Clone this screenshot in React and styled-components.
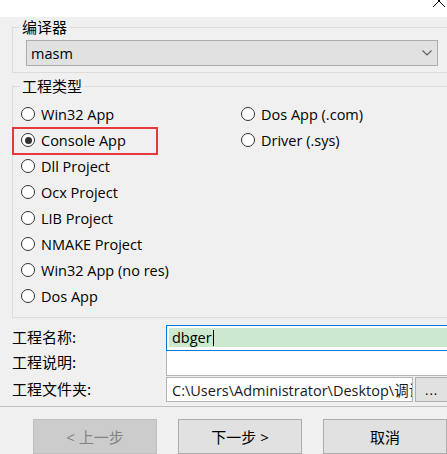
import React from "react";
import styled, { createGlobalStyle, css } from "styled-components";

const Global = createGlobalStyle`
  html, body { margin: 0; padding: 0; background: #f0f0f0; }
  * { box-sizing: border-box; }
`;

const LATIN = `"Open Sans", "Noto Sans CJK SC", sans-serif`;
const CJK = `"Noto Sans CJK SC", "Open Sans", sans-serif`;

const Window = styled.div`
  width: 447px;
  height: 454px;
  overflow: hidden;
  background: #f0f0f0;
  display: flex;
  flex-direction: column;
  color: #000;
`;

const TitleBar = styled.div`
  height: 17px;
  flex: none;
  background: #fff;
  display: flex;
  justify-content: flex-end;
  align-items: flex-start;
  overflow: hidden;
`;

const CloseIcon = styled.svg`
  margin-top: -6px;
  margin-right: 1px;
`;

const Body = styled.div`
  display: flex;
  flex-direction: column;
  padding-left: 12px;
`;

const GroupBox = styled.div`
  width: 450px;
  border: 1px solid #dcdcdc;
  margin-top: ${(p) => p.$top}px;
  padding-bottom: ${(p) => p.$bottom}px;
  display: flex;
  flex-direction: column;
  align-items: flex-start;
`;

const Legend = styled.span`
  margin: -9px 0 0 7px;
  padding: 0 2px;
  height: 16px;
  line-height: 16px;
  font-family: ${CJK};
  font-size: 15px;
  background: #f0f0f0;
  color: #000;
`;

const Select = styled.div`
  margin: 5px 0 0 13px;
  width: 412px;
  height: 26px;
  border: 1px solid #adadad;
  background: #e1e1e1;
  display: flex;
  align-items: center;
  justify-content: space-between;
  padding: 0 5px 0 4px;
  font-family: ${LATIN};
  font-size: 14.5px;
`;

const Columns = styled.div`
  display: flex;
  margin: 7px 0 0 8px;
`;

const Column = styled.div`
  display: flex;
  flex-direction: column;
  width: ${(p) => p.$width}px;
`;

const RadioRow = styled.div`
  position: relative;
  height: 26px;
  display: flex;
  align-items: center;
  font-family: ${LATIN};
  font-size: 14.5px;
  white-space: nowrap;
  ${(p) =>
    p.$marked &&
    css`
      &::after {
        content: "";
        position: absolute;
        top: 0;
        bottom: -2px;
        left: -9px;
        width: 142px;
        border: 2px solid #e8383b;
      }
    `}
`;

const Circle = styled.span`
  width: 14px;
  height: 14px;
  border-radius: 50%;
  border: 1px solid #333;
  background: #fff;
  margin-right: 6px;
  display: flex;
  align-items: center;
  justify-content: center;
  flex: none;
  &::before {
    content: "";
    display: ${(p) => (p.$checked ? "block" : "none")};
    width: 7px;
    height: 7px;
    border-radius: 50%;
    background: #333;
  }
`;

const Form = styled.div`
  margin-top: 7px;
  display: grid;
  grid-template-columns: 154px 300px;
  grid-template-rows: 26px 25px 26px;
  row-gap: 0;
`;

const FieldLabel = styled.div`
  font-family: ${CJK};
  font-size: 15px;
  line-height: 18px;
  align-self: center;
  margin-top: ${(p) => p.$shift || 0}px;
`;

const NameInput = styled.div`
  border: 1px solid #0078d7;
  background: #fff;
  padding: 2px 0 3px 2px;
  display: flex;
`;

const Fill = styled.div`
  flex: 1;
  background: #cce8cf;
  display: flex;
  align-items: center;
  padding-left: 3px;
  font-family: ${LATIN};
  font-size: 14.5px;
`;

const Caret = styled.span`
  width: 1px;
  height: 16px;
  background: #000;
  margin-left: 1px;
`;

const DescInput = styled.div`
  border: 1px solid #b4b4b4;
  border-top: none;
  background: #fff;
`;

const FolderRow = styled.div`
  display: flex;
  gap: 2px;
  margin-top: 1px;
`;

const PathInput = styled.div`
  width: 247px;
  border: 1px solid #b4b4b4;
  background: #fff;
  overflow: hidden;
  white-space: nowrap;
  display: flex;
  align-items: center;
  padding-left: 5px;
  font-family: ${LATIN};
  font-size: 14.5px;
  color: #1a1a1a;
`;

const BrowseButton = styled.div`
  width: 40px;
  border: 1px solid #adadad;
  background: #e1e1e1;
  display: flex;
  align-items: center;
  padding-left: 9px;
  font-family: ${LATIN};
  font-size: 13px;
  letter-spacing: 1px;
`;

const Separator = styled.div`
  height: 1px;
  background: #c0c0c0;
  margin-top: 4px;
  flex: none;
`;

const ButtonRow = styled.div`
  display: flex;
  gap: 21px;
  padding-left: 33px;
  margin-top: 12px;
`;

const Button = styled.div`
  width: 124px;
  height: 35px;
  flex: none;
  display: flex;
  align-items: center;
  justify-content: center;
  font-family: ${LATIN};
  font-size: 15px;
  border: 1px solid ${(p) => (p.$disabled ? "#bfbfbf" : "#adadad")};
  background: ${(p) => (p.$disabled ? "#cccccc" : "#e1e1e1")};
  color: ${(p) => (p.$disabled ? "#838383" : "#000")};
`;

const Radio = ({ label, checked, marked }) => (
  <RadioRow $marked={marked}>
    <Circle $checked={checked} />
    {label}
  </RadioRow>
);

export default function App() {
  const left = [
    "Win32 App",
    "Console App",
    "Dll Project",
    "Ocx Project",
    "LIB Project",
    "NMAKE Project",
    "Win32 App (no res)",
    "Dos App",
  ];
  const right = ["Dos App (.com)", "Driver (.sys)"];
  return (
    <>
      <Global />
      <Window>
        <TitleBar>
          <CloseIcon width="14" height="14" viewBox="0 0 14 14">
            <path d="M1 1 L13 13 M13 1 L1 13" stroke="#000" strokeWidth="1" fill="none" />
          </CloseIcon>
        </TitleBar>
        <Body>
          <GroupBox $top={10} $bottom={6}>
            <Legend>编译器</Legend>
            <Select>
              <span>masm</span>
              <svg width="10" height="6" viewBox="0 0 10 6">
                <path d="M0.5 0.5 L5 5 L9.5 0.5" stroke="#606060" strokeWidth="1.2" fill="none" />
              </svg>
            </Select>
          </GroupBox>
          <GroupBox $top={13} $bottom={8}>
            <Legend>工程类型</Legend>
            <Columns>
              <Column $width={220}>
                {left.map((l) => (
                  <Radio
                    key={l}
                    label={l}
                    checked={l === "Console App"}
                    marked={l === "Console App"}
                  />
                ))}
              </Column>
              <Column $width={200}>
                {right.map((l) => (
                  <Radio key={l} label={l} />
                ))}
              </Column>
            </Columns>
          </GroupBox>
        </Body>
        <Body>
          <Form>
            <FieldLabel $shift={-2}>工程名称:</FieldLabel>
            <NameInput>
              <Fill>
                dbger
                <Caret />
              </Fill>
            </NameInput>
            <FieldLabel $shift={-4}>工程说明:</FieldLabel>
            <DescInput />
            <FieldLabel>工程文件夹:</FieldLabel>
            <FolderRow>
              <PathInput>C:\Users\Administrator\Desktop\调试器</PathInput>
              <BrowseButton>...</BrowseButton>
            </FolderRow>
          </Form>
        </Body>
        <Separator />
        <ButtonRow>
          <Button $disabled>&lt; 上一步</Button>
          <Button>下一步 &gt;</Button>
          <Button>取消</Button>
        </ButtonRow>
      </Window>
    </>
  );
}
